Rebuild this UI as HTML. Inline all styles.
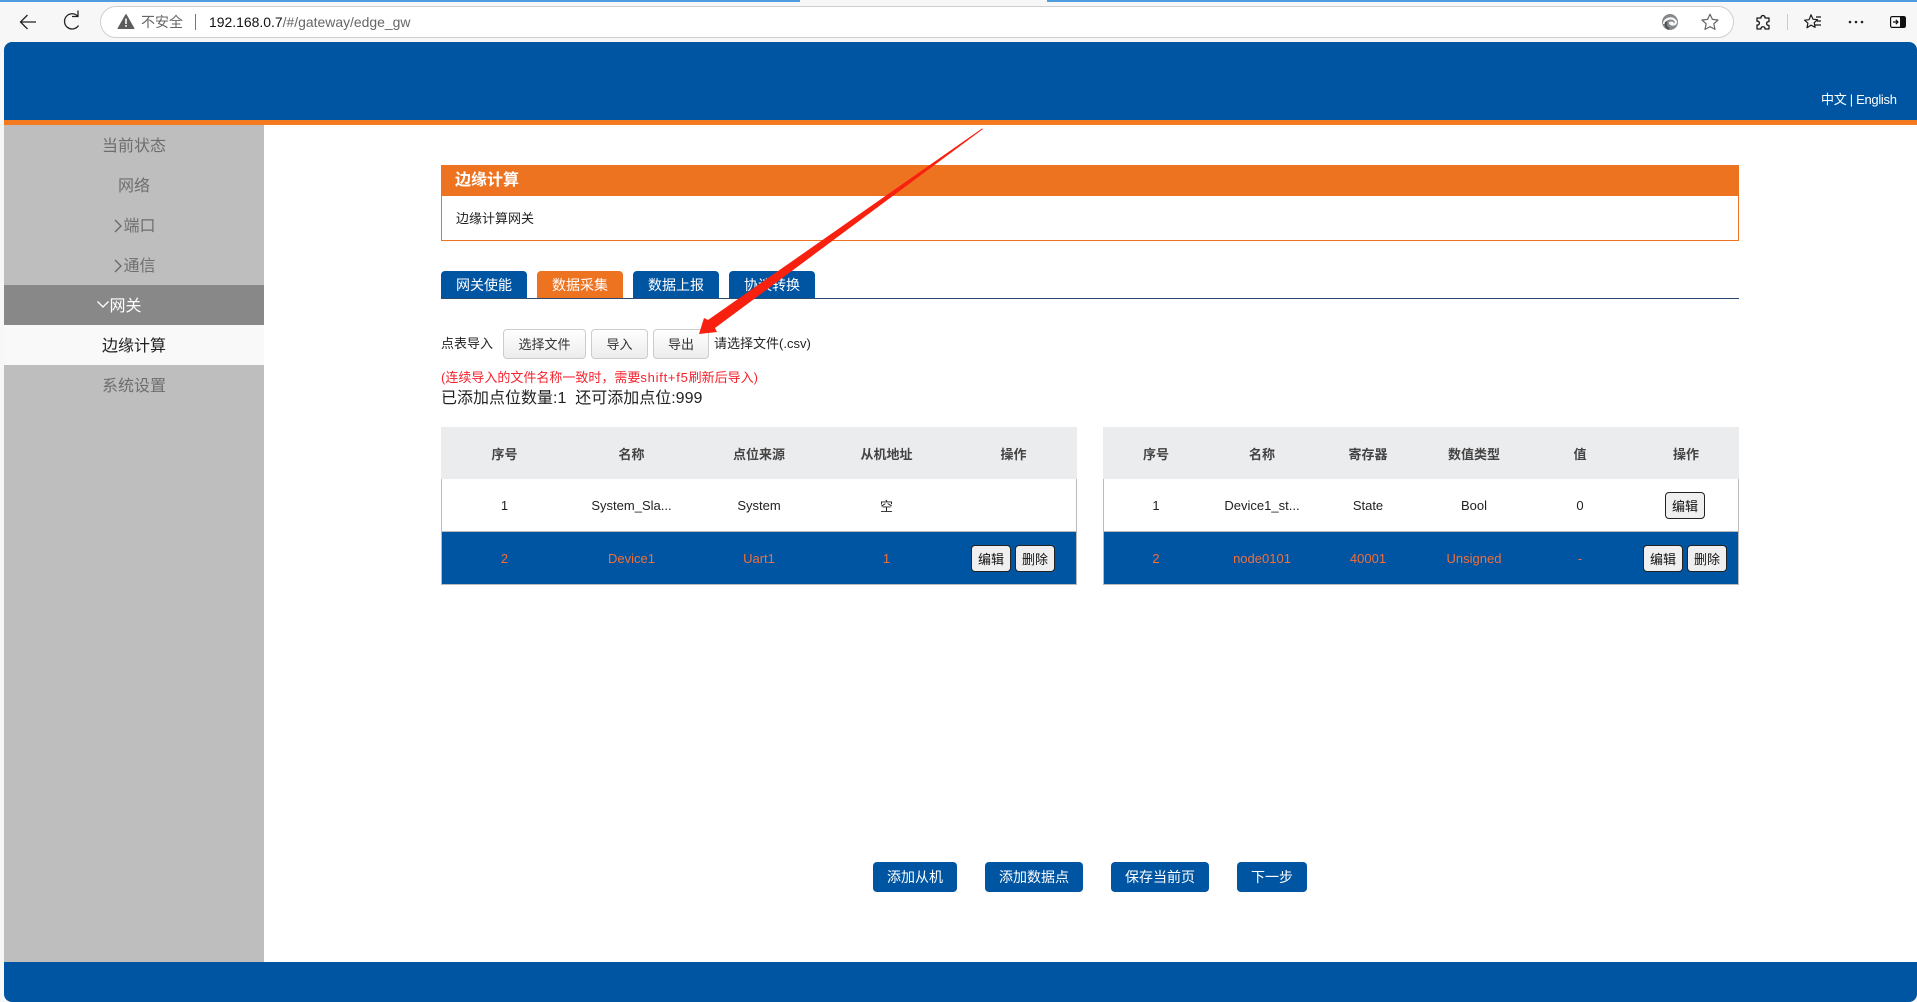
<!DOCTYPE html>
<html lang="zh">
<head>
<meta charset="utf-8">
<title>边缘计算</title>
<style>
html,body{margin:0;padding:0;width:1917px;height:1002px;overflow:hidden;background:#f7f7f7;}
body{position:relative;font-family:"Liberation Sans","Noto Sans CJK SC",sans-serif;font-size:13px;color:#222;}
div,span,svg{position:absolute;box-sizing:border-box;}
span.i{position:static;}
.c{display:flex;align-items:center;justify-content:center;white-space:nowrap;}
.t{white-space:nowrap;line-height:20px;height:20px;}
.nav{left:4px;width:260px;height:40px;font-size:16px;color:#6e6e6e;padding-bottom:2px;}
.tab{top:271px;height:27px;width:86px;background:#0055a3;color:#fff;font-size:14px;border-radius:4px 4px 0 0;padding-top:1px;}
.fb{top:329px;height:30px;background:linear-gradient(#fff,#ececec);border:1px solid #ccc;border-radius:4px;color:#333;padding-bottom:2px;}
.th{top:427px;height:52px;font-weight:bold;color:#444;}
.r1{top:479px;height:52px;color:#222;padding-top:1px;}
.r2{top:532px;height:52px;color:#ef6f3c;padding-top:1px;}
.ob{width:40px;height:27px;background:#efefef;border:1px solid #222;border-radius:4px;color:#111;}
.bb{top:862px;height:30px;background:#0055a3;color:#fff;font-size:14px;border-radius:4px;}
</style>
</head>
<body>
<!-- browser chrome -->
<div style="left:0;top:0;width:800px;height:2px;background:#4f9ddf"></div>
<div style="left:1047px;top:0;width:870px;height:2px;background:#4f9ddf"></div>
<svg style="left:0;top:0" width="100" height="42" viewBox="0 0 100 42" fill="none" stroke="#222" stroke-width="1.3">
<path d="M36 22H20.5M27.5 15l-7 7 7 7"/>
<path d="M78.5 25.5a7.6 7.6 0 1 1-1-9.500M78 10.500V16.500H72"/>
</svg>
<div style="left:100px;top:6px;width:1634px;height:32px;background:#fff;border:1px solid #cfcfcf;border-radius:16px"></div>
<svg style="left:117px;top:13px" width="18" height="17" viewBox="0 0 18 17"><path d="M9 1.500L17 15.500H1z" fill="#5c5c5c" stroke="#5c5c5c" stroke-linejoin="round"/><rect x="8.200" y="5.500" width="1.600" height="5.500" fill="#fff"/><rect x="8.200" y="12" width="1.600" height="1.700" fill="#fff"/></svg>
<div class="t" style="left:141px;top:12px;font-size:14px;color:#666">不安全</div>
<div style="left:195px;top:14px;width:1px;height:16px;background:#777"></div>
<div class="t" style="left:209px;top:12px;font-size:13.95px;color:#666"><span class="i" style="color:#111">192.168.0.7</span>/#/gateway/edge_gw</div>
<svg style="left:1660px;top:12px" width="20" height="20" viewBox="0 0 20 20"><circle cx="10" cy="10" r="8" fill="#84898d"/><path d="M4 12c0-6 10-8 12-2 0 3-5 3.500-6 1 2-1 3 0 3 1" fill="none" stroke="#f7f7f7" stroke-width="2.200"/><path d="M9 17c-4-2-4-6-2-7" fill="none" stroke="#4f5356" stroke-width="2.200"/></svg>
<svg style="left:1700px;top:12px" width="20" height="20" viewBox="0 0 20 20"><path d="M10 2.200l2.400 5.200 5.600.6-4.200 3.800 1.200 5.600L10 14.600l-5 2.800 1.200-5.600L2 8l5.600-.6z" fill="none" stroke="#666" stroke-width="1.200" stroke-linejoin="round"/></svg>
<svg style="left:1755px;top:14px" width="17" height="17" viewBox="0 0 17 17"><path d="M6 3.200C6 1 10 1 10 3.200V4h4v3.600h-.6c-2.400 0-2.400 3.800 0 3.800h.6V15h-4v-.6c0-2.200-4-2.200-4 0v.6H2v-4h.6c2.400 0 2.400-3.800 0-3.800H2V4h4z" fill="none" stroke="#1a1a1a" stroke-width="1.300" stroke-linejoin="round"/></svg>
<div style="left:1787px;top:14px;width:1px;height:16px;background:#ccc"></div>
<svg style="left:1803px;top:13px" width="19" height="18" viewBox="0 0 19 18" fill="none" stroke="#1a1a1a" stroke-width="1.200"><path d="M8 1.800l2 4.400 4.500.5-3.300 3 .9 4.600L8 12.100l-4 2.700.9-4.600-3.300-3 4.500-.5z" stroke-linejoin="round"/><path d="M13 4h5M14 8h4M12 12h6"/></svg>
<svg style="left:1848px;top:20px" width="16" height="4" viewBox="0 0 16 4" fill="#222"><circle cx="2" cy="2" r="1.300"/><circle cx="8" cy="2" r="1.300"/><circle cx="14" cy="2" r="1.300"/></svg>
<svg style="left:1890px;top:16px" width="16" height="12" viewBox="0 0 16 12"><rect x=".6" y=".6" width="14.800" height="10.800" rx="1.500" fill="#fff" stroke="#111" stroke-width="1.200"/><rect x="10" y="1" width="5.500" height="10" fill="#111"/><path d="M3 6h4.500M5.800 3.800L8 6 5.800 8.200" fill="none" stroke="#111" stroke-width="1.200"/></svg>

<!-- page -->
<div style="left:4px;top:42px;width:1913px;height:960px;background:#fff;border-radius:8px;overflow:hidden">
  <div style="left:0;top:0;width:1913px;height:78px;background:#0055a3"></div>
  <div style="left:0;top:78px;width:1913px;height:5px;background:#f37a1f"></div>
  <div style="left:0;top:83px;width:260px;height:837px;background:#bebebe"></div>
  <div style="left:0;top:920px;width:1913px;height:40px;background:#0055a3"></div>
</div>
<div class="t" style="left:1821px;top:90px;color:#fff;font-size:13px;letter-spacing:-.3px">中文 | English</div>

<!-- sidebar -->
<div class="nav c" style="top:125px">当前状态</div>
<div class="nav c" style="top:165px">网络</div>
<div class="nav c" style="top:205px"><span class="i" style="margin-left:11px">端口</span></div>
<div class="nav c" style="top:245px"><span class="i" style="margin-left:11px">通信</span></div>
<div class="nav c" style="top:285px;background:#888;color:#fff"><span class="i" style="margin-right:17px">网关</span></div>
<div class="nav c" style="top:325px;background:#f9f9f9;color:#222">边缘计算</div>
<div class="nav c" style="top:365px">系统设置</div>
<svg style="left:113px;top:219px" width="10" height="14" viewBox="0 0 10 14"><path d="M2 1l6 6-6 6" fill="none" stroke="#666" stroke-width="1.300"/></svg>
<svg style="left:113px;top:259px" width="10" height="14" viewBox="0 0 10 14"><path d="M2 1l6 6-6 6" fill="none" stroke="#666" stroke-width="1.300"/></svg>
<svg style="left:96px;top:300px" width="14" height="9" viewBox="0 0 14 9"><path d="M1.500 1.500L7 7l5.500-5.500" fill="none" stroke="#fff" stroke-width="1.300"/></svg>

<!-- title panel -->
<div style="left:441px;top:165px;width:1298px;height:76px;border:1px solid #ee7320;background:#fff"></div>
<div style="left:441px;top:165px;width:1298px;height:31px;background:#ee7320"></div>
<div class="t" style="left:455px;top:171px;color:#fff;font-size:16px;font-weight:bold">边缘计算</div>
<div class="t" style="left:456px;top:209px;font-size:13px;color:#222">边缘计算网关</div>

<!-- tabs -->
<div style="left:441px;top:298px;width:1298px;height:1px;background:#2b4a6f"></div>
<div class="tab c" style="left:441px">网关使能</div>
<div class="tab c" style="left:537px;background:#ee7320">数据采集</div>
<div class="tab c" style="left:633px">数据上报</div>
<div class="tab c" style="left:729px">协议转换</div>

<!-- file row -->
<div class="t" style="left:441px;top:334px">点表导入</div>
<div class="fb c" style="left:503px;width:83px">选择文件</div>
<div class="fb c" style="left:591px;width:57px">导入</div>
<div class="fb c" style="left:653px;width:56px">导出</div>
<div class="t" style="left:714px;top:334px">请选择文件(.csv)</div>
<div class="t" style="left:441px;top:368px;color:#f5222d;font-size:13px">(连续导入的文件名称一致时，需要<span class="i" style="letter-spacing:.75px">shift+f5</span>刷新后导入)</div>
<div class="t" style="left:441px;top:389px;font-size:16px;color:#222;white-space:pre">已添加点位数量:1  还可添加点位:999</div>

<!-- left table -->
<div style="left:441px;top:427px;width:636px;height:158px;border:1px solid #bbb;border-top:0;background:#fff"></div>
<div style="left:441px;top:427px;width:636px;height:52px;background:#ebecee"></div>
<div style="left:442px;top:531px;width:634px;height:1px;background:#bbb"></div>
<div style="left:442px;top:532px;width:634px;height:52px;background:#0055a3"></div>
<div class="th c" style="left:441px;width:127px">序号</div>
<div class="th c" style="left:568px;width:127px">名称</div>
<div class="th c" style="left:695px;width:128px">点位来源</div>
<div class="th c" style="left:823px;width:127px">从机地址</div>
<div class="th c" style="left:950px;width:127px">操作</div>
<div class="r1 c" style="left:441px;width:127px">1</div>
<div class="r1 c" style="left:568px;width:127px">System_Sla...</div>
<div class="r1 c" style="left:695px;width:128px">System</div>
<div class="r1 c" style="left:823px;width:127px">空</div>
<div class="r2 c" style="left:441px;width:127px">2</div>
<div class="r2 c" style="left:568px;width:127px">Device1</div>
<div class="r2 c" style="left:695px;width:128px">Uart1</div>
<div class="r2 c" style="left:823px;width:127px">1</div>
<div class="ob c" style="left:971px;top:545px">编辑</div>
<div class="ob c" style="left:1015px;top:545px">删除</div>

<!-- right table -->
<div style="left:1103px;top:427px;width:636px;height:158px;border:1px solid #bbb;border-top:0;background:#fff"></div>
<div style="left:1103px;top:427px;width:636px;height:52px;background:#ebecee"></div>
<div style="left:1104px;top:531px;width:634px;height:1px;background:#bbb"></div>
<div style="left:1104px;top:532px;width:634px;height:52px;background:#0055a3"></div>
<div class="th c" style="left:1103px;width:106px">序号</div>
<div class="th c" style="left:1209px;width:106px">名称</div>
<div class="th c" style="left:1315px;width:106px">寄存器</div>
<div class="th c" style="left:1421px;width:106px">数值类型</div>
<div class="th c" style="left:1527px;width:106px">值</div>
<div class="th c" style="left:1633px;width:106px">操作</div>
<div class="r1 c" style="left:1103px;width:106px">1</div>
<div class="r1 c" style="left:1209px;width:106px">Device1_st...</div>
<div class="r1 c" style="left:1315px;width:106px">State</div>
<div class="r1 c" style="left:1421px;width:106px">Bool</div>
<div class="r1 c" style="left:1527px;width:106px">0</div>
<div class="r2 c" style="left:1103px;width:106px">2</div>
<div class="r2 c" style="left:1209px;width:106px">node0101</div>
<div class="r2 c" style="left:1315px;width:106px">40001</div>
<div class="r2 c" style="left:1421px;width:106px">Unsigned</div>
<div class="r2 c" style="left:1527px;width:106px">-</div>
<div class="ob c" style="left:1665px;top:492px">编辑</div>
<div class="ob c" style="left:1643px;top:545px">编辑</div>
<div class="ob c" style="left:1687px;top:545px">删除</div>

<!-- bottom buttons -->
<div class="bb c" style="left:873px;width:84px">添加从机</div>
<div class="bb c" style="left:985px;width:98px">添加数据点</div>
<div class="bb c" style="left:1111px;width:98px">保存当前页</div>
<div class="bb c" style="left:1237px;width:70px">下一步</div>

<!-- annotation arrow -->
<svg style="left:0;top:0" width="1917" height="1002" viewBox="0 0 1917 1002"><polygon points="983,129 982,128.500 708,320 704,318 699,334 717,332 715,328" fill="#f8200f"/></svg>
</body>
</html>
